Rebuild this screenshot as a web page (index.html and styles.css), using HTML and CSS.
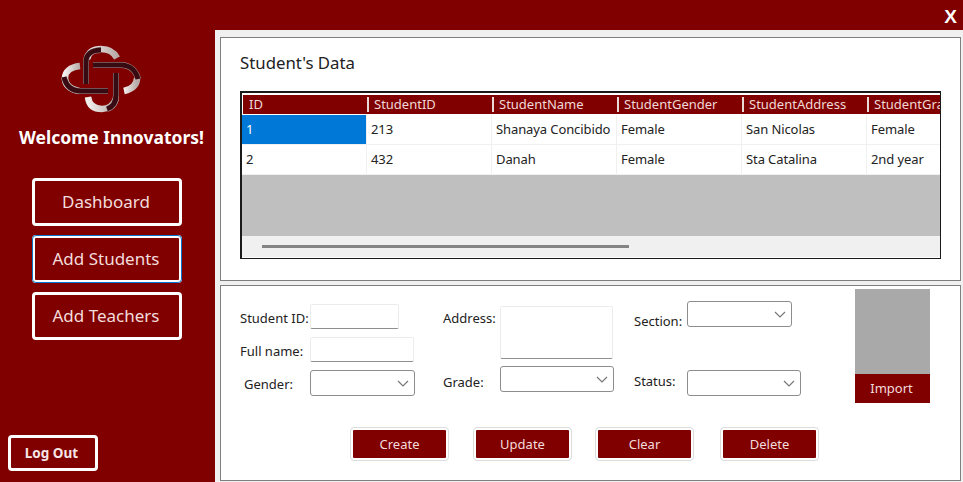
FILE: index.html
```html
<!DOCTYPE html>
<html lang="en">
<head>
<meta charset="utf-8">
<title>Student's Data</title>
<link rel="stylesheet" href="styles.css">
</head>
<body>
<div class="app">
  <header class="topbar"><span class="close">X</span></header>
  <aside class="sidebar">
    <svg class="logo" width="80" height="68" viewBox="0 0 80 68" aria-hidden="true">
      <defs>
        <linearGradient id="fadeR" x1="0" y1="0" x2="1" y2="0"><stop offset="0" stop-color="#f2efed"/><stop offset="1" stop-color="#b7aaa8"/></linearGradient>
      </defs>
      <g fill="none">
        <path class="light" stroke="url(#fadeR)" d="M26 14C28 6 33 4 40 4C48 4 53 7 56 13"/>
        <path class="light" stroke="url(#fadeR)" d="M19 21C9 22 4 27 4 33C4 39 8 44 18 46"/>
        <path class="light" stroke="url(#fadeR)" d="M27 52C28 60 33 64 41 64C47 64 52 61 55 54"/>
        <path class="light" stroke="url(#fadeR)" d="M63 46C72 44 76 39 76 33"/>
        <path class="edge" d="M40 5C31 5 25 9 25 17V39"/>
        <path class="dark" d="M40 5C31 5 25 9 25 17V39"/>
        <path class="edge" d="M32 20H60C69 20 75 26 77 34"/>
        <path class="dark" d="M32 20H60C69 20 75 26 77 34"/>
        <path class="edge" d="M55 28V50C55 57 52 62 46 64"/>
        <path class="dark" d="M55 28V50C55 57 52 62 46 64"/>
        <path class="edge" d="M3 32C5 41 11 46 20 46H47"/>
        <path class="dark" d="M3 32C5 41 11 46 20 46H47"/>
      </g>
    </svg>
    <h1 class="welcome">Welcome Innovators!</h1>
    <nav class="nav">
      <button class="nav-btn" type="button">Dashboard</button>
      <button class="nav-btn nav-btn-active" type="button">Add Students</button>
      <button class="nav-btn" type="button">Add Teachers</button>
    </nav>
    <button class="logout" type="button">Log Out</button>
  </aside>
  <main class="main">
    <section class="panel panel-data">
      <h2 class="panel-title">Student's Data</h2>
      <div class="grid-view">
        <div class="grid-row grid-head">
          <span>ID</span><span>StudentID</span><span>StudentName</span><span>StudentGender</span><span>StudentAddress</span><span>StudentGrade</span>
        </div>
        <div class="grid-row grid-body">
          <span class="selected">1</span><span>213</span><span>Shanaya Concibido</span><span>Female</span><span>San Nicolas</span><span>Female</span>
        </div>
        <div class="grid-row grid-body">
          <span>2</span><span>432</span><span>Danah</span><span>Female</span><span>Sta Catalina</span><span>2nd year</span>
        </div>
        <div class="grid-empty"></div>
        <div class="scrollbar"><div class="thumb"></div></div>
      </div>
    </section>
    <section class="panel panel-form">
      <div class="form-cols">
        <div class="col col-a">
          <div class="field"><label class="lbl lbl-a lbl-down2">Student ID:</label><input class="txt txt-id" type="text"></div>
          <div class="field"><label class="lbl lbl-a lbl-down2">Full name:</label><input class="txt txt-name" type="text"></div>
          <div class="field"><label class="lbl lbl-a lbl-indent lbl-down2">Gender:</label>
            <div class="combo combo-short"><svg width="12" height="7" viewBox="0 0 12 7"><path d="M1 1l5 5 5-5"/></svg></div></div>
        </div>
        <div class="col col-b">
          <div class="field field-top"><label class="lbl lbl-b">Address:</label><textarea class="txt area"></textarea></div>
          <div class="field field-fixed"><label class="lbl lbl-b lbl-down6">Grade:</label>
            <div class="combo combo-long"><svg width="12" height="7" viewBox="0 0 12 7"><path d="M1 1l5 5 5-5"/></svg></div></div>
        </div>
        <div class="col col-c">
          <div class="field field-fixed"><label class="lbl lbl-c lbl-down14">Section:</label>
            <div class="combo combo-short"><svg width="12" height="7" viewBox="0 0 12 7"><path d="M1 1l5 5 5-5"/></svg></div></div>
          <div class="field field-fixed"><label class="lbl lbl-c lbl-up4">Status:</label>
            <div class="combo combo-long"><svg width="12" height="7" viewBox="0 0 12 7"><path d="M1 1l5 5 5-5"/></svg></div></div>
        </div>
        <div class="col col-d">
          <div class="photo"></div>
          <button class="import" type="button">Import</button>
        </div>
      </div>
      <div class="actions">
        <button class="act" type="button">Create</button>
        <button class="act" type="button">Update</button>
        <button class="act" type="button">Clear</button>
        <button class="act" type="button">Delete</button>
      </div>
    </section>
  </main>
</div>
</body>
</html>
```
FILE: styles.css
```css
* { box-sizing: border-box; }
html, body { margin: 0; padding: 0; }
body {
  width: 963px;
  height: 482px;
  overflow: hidden;
  font-family: "Noto Sans", "DejaVu Sans", sans-serif;
  font-size: 13px;
  color: #222;
}
button { font-family: inherit; cursor: pointer; }

.app {
  display: grid;
  grid-template-columns: 215px 1fr;
  grid-template-rows: 30px 1fr;
  width: 963px;
  height: 482px;
  background: #800000;
}
.topbar {
  grid-column: 1 / 3;
  display: flex;
  justify-content: flex-end;
  padding: 6px 6px 0 0;
}
.close { color: #fff; font-family: "Liberation Sans", sans-serif; font-weight: 700; font-size: 19px; line-height: 22px; }

.sidebar {
  display: flex;
  flex-direction: column;
  padding: 15px 0 11px 8px;
}
.logo { margin-left: 53px; display: block; }
.welcome {
  margin: 14px 0 0 11px;
  color: #fff;
  font-family: "Noto Sans", sans-serif;
  font-size: 17.5px;
  line-height: 20px;
  font-weight: 700;
  white-space: nowrap;
}
.light { stroke-width: 6.5; }
.edge { stroke: #a99a9a; stroke-width: 6; }
.dark { stroke: #380a12; stroke-width: 5; }

.nav { display: flex; flex-direction: column; gap: 9px; margin: 31px 0 0 24px; }
.nav-btn {
  width: 150px;
  height: 48px;
  background: #800000;
  color: #f3dcdc;
  border: 3px solid #fff;
  border-radius: 4px;
  font-size: 17px;
  padding: 0 2px 2px 0;
}
.nav-btn-active { outline: 1px solid #0a74d0; outline-offset: -1px; }
.logout {
  margin-top: auto;
  width: 90px;
  height: 36px;
  background: #800000;
  color: #f6e6e6;
  border: 3px solid #fff;
  border-radius: 4px;
  font-weight: 700;
  font-size: 13.5px;
  padding: 0 3px 0 0;
}

.main {
  background: #f0f0f0;
  padding: 7px 2px 1px 5px;
  display: flex;
  flex-direction: column;
  gap: 4px;
}
.panel { background: #fff; border: 1px solid #7f7f7f; }
.panel-data { height: 244px; padding: 13px 19px 0; }
.panel-form { flex: 1; padding: 3px 19px 0; }
.panel-title { margin: 0 0 16px; font-weight: 400; font-size: 16.8px; line-height: 24px; color: #222; }

.grid-view {
  width: 701px;
  height: 168px;
  border-style: solid;
  border-color: #1a1a1a;
  border-width: 2px 1px 1px 2px;
  overflow: hidden;
  background: #fff;
}
.grid-row { display: grid; grid-template-columns: repeat(6, 125px); width: 750px; }
.grid-row span { white-space: nowrap; }
.grid-head {
  grid-template-columns: 124px repeat(5, 125px);
  margin: 2px 0 0 1px;
  height: 19px;
  background: #800000;
  color: #f0d8d8;
}
.grid-head span { padding-left: 5px; border-left: 2px solid #e8d8d8; margin: 2px 0; line-height: 15px; }
.grid-head span:first-child { border-left: 0; padding-left: 6px; }
.grid-body { height: 30px; line-height: 29px; border-bottom: 1px solid #f0f0f0; letter-spacing: -0.1px; }
.grid-body span { padding-left: 4px; border-right: 1px solid #f0f0f0; }
.grid-head + .grid-body { margin-top: 1px; }
.selected { background: #0078d7; color: #fff; }
.grid-empty { height: 61px; background: #bfbfbf; }
.scrollbar { height: 21px; background: #f0f0f0; padding: 9px 0 0 20px; }
.thumb { width: 367px; height: 3px; background: #858585; }

.form-cols { display: grid; grid-template-columns: 203px 191px 221px 75px; height: 114px; }
.col-a { padding-top: 15px; display: flex; flex-direction: column; gap: 8px; }
.col-b { padding-top: 17px; display: flex; flex-direction: column; gap: 7px; }
.col-c { padding-top: 12px; display: flex; flex-direction: column; gap: 43px; }
.field { display: flex; align-items: center; height: 25px; }
.field-fixed { height: 26px; }
.col-a .field:last-child { height: 26px; }
.field-top { align-items: flex-start; height: 53px; }
.field-top .lbl { margin-top: 3px; }
.lbl { white-space: nowrap; display: block; }
.lbl-a { width: 70px; }
.lbl-b { width: 57px; }
.lbl-c { width: 53px; }
.lbl-indent { padding-left: 4px; }
.lbl-down2 { margin-top: 2px; }
.lbl-down6 { margin-top: 6px; }
.lbl-down14 { margin-top: 14px; }
.lbl-up4 { margin-bottom: 4px; }
.txt {
  display: block;
  background: #fff;
  border: 1px solid #ececec;
  border-bottom: 1px solid #8f8f8f;
  border-radius: 2px;
  padding: 0;
  margin: 0;
  resize: none;
  outline: 0;
}
.txt-id { width: 89px; height: 25px; }
.txt-name { width: 104px; height: 25px; }
.area { width: 113px; height: 53px; }
.combo {
  flex: none;
  height: 26px;
  background: #fff;
  border: 1px solid #8d8d8d;
  border-radius: 3px;
  display: flex;
  align-items: center;
  justify-content: flex-end;
  padding: 0 5px 0 0;
}
.combo svg { fill: none; stroke: #777; stroke-width: 1.2; }
.combo-short { width: 105px; }
.combo-long { width: 114px; }

.col-d { display: flex; flex-direction: column; }
.photo { height: 85px; background: #a9a9a9; }
.import {
  height: 29px;
  background: #800000;
  color: #f3dcdc;
  border: 0;
  font-size: 13px;
  padding: 0 2px 2px 0;
}

.actions { display: grid; grid-template-columns: 123px 122px 125px 99px; margin: 24px 0 0 110px; }
.act {
  width: 99px;
  height: 34px;
  background: #800000;
  color: #f3dcdc;
  border: 3px solid #fff;
  outline: 1px solid #dcdcdc;
  outline-offset: -1px;
  border-radius: 4px;
  font-size: 13px;
  padding: 0;
}
```
